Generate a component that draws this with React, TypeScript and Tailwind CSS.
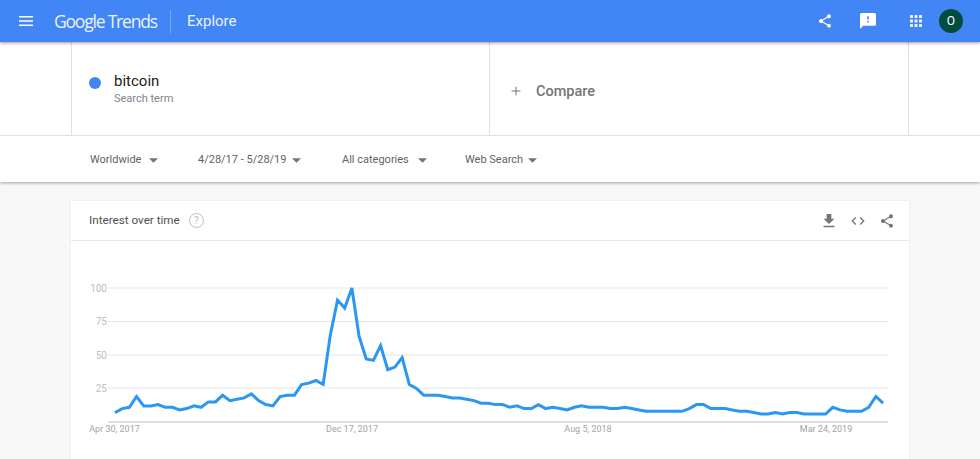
import React from 'react';
import { Plus } from 'lucide-react';

const values = [
  7, 10, 11, 19, 12, 12, 13, 11, 11, 9, 10, 12, 11, 15, 15, 20, 16, 17, 18, 21, 16, 13, 12, 19, 20, 20, 28, 29, 31, 28,
  65, 91, 85, 100, 64, 47, 46, 57, 39, 41, 48, 28, 25, 20, 20, 20, 19, 18, 18, 17, 16, 14, 14, 13, 13, 11, 12, 10, 10,
  13, 10, 11, 10, 9, 11, 12, 11, 11, 11, 10, 10, 11, 10, 9, 8, 8, 8, 8, 8, 8, 10, 13, 13, 10, 10, 10, 9, 8, 8, 7, 6, 6,
  7, 6, 7, 7, 6, 6, 6, 6, 11, 9, 8, 8, 8, 11, 19, 14,
];

const points = values.map((v, i) => `${115 + i * 7.178},${(422 - v * 1.34).toFixed(1)}`).join(' ');

const filters = [
  { label: 'Worldwide', width: 'w-[108px]', gap: 'ml-[8px]' },
  { label: '4/28/17 - 5/28/19', width: 'w-[144px]', gap: 'ml-[6px]' },
  { label: 'All categories', width: 'w-[123px]', gap: 'ml-[9px]' },
  { label: 'Web Search', width: 'w-auto', gap: 'ml-[5px]' },
];

const Chart: React.FC = () => (
  <svg width="980" height="218" viewBox="0 241 980 218" className="block -ml-[71px]">
    {[288, 321.5, 355, 388].map((y) => (
      <line key={y} x1="108" x2="888" y1={y} y2={y} stroke="#e8e8e8" strokeWidth="1" />
    ))}
    <line x1="108" x2="888" y1="422" y2="422" stroke="#bdbdbd" strokeWidth="1" />
    {[
      ['100', 291.5],
      ['75', 325],
      ['50', 358.5],
      ['25', 392],
    ].map(([t, y]) => (
      <text key={t} x="107" y={y} textAnchor="end" fontSize="10" fill="#b9bfc9" fontFamily="Roboto, sans-serif">
        {t}
      </text>
    ))}
    {[
      ['Apr 30, 2017', 114.5],
      ['Dec 17, 2017', 352],
      ['Aug 5, 2018', 588],
      ['Mar 24, 2019', 826],
    ].map(([t, x]) => (
      <text key={t} x={x} y="432" textAnchor="middle" fontSize="9" fill="#a3a3a3" fontFamily="Roboto, sans-serif">
        {t}
      </text>
    ))}
    <polyline points={points} fill="none" stroke="#2b97f3" strokeWidth="3" strokeLinejoin="miter" />
  </svg>
);

export default function App() {
  return (
    <div className="h-[459px] w-[980px] overflow-hidden bg-[#f8f8f8] font-['Roboto',sans-serif]">
      {/* Header */}
      <header className="relative z-20 flex h-[42px] items-center bg-[#4285f4] text-white shadow-[0_1px_3px_rgba(0,0,0,0.4)]">
        <svg width="14" height="10" viewBox="0 0 14 10" className="ml-[19px]">
          <path d="M0 0h14v1.5H0zM0 4.2h14v1.5H0zM0 8.5h14V10H0z" fill="#fff" />
        </svg>
        <span className="ml-[21px] w-[103px] font-['Open_Sans',sans-serif] text-[17.5px] tracking-[-1.2px] whitespace-nowrap opacity-90">
          Google Trends
        </span>
        <div className="ml-[13px] h-[23px] w-px bg-white/30" />
        <span className="ml-[16px] text-[15px] opacity-90">Explore</span>
        <div className="ml-auto flex items-center">
          <svg width="16" height="16" viewBox="0 0 24 24" fill="#fff" className="mr-[27px]">
            <path d="M18 16.08c-.76 0-1.44.3-1.96.77L8.91 12.7c.05-.23.09-.46.09-.7s-.04-.47-.09-.7l7.05-4.11c.54.5 1.25.81 2.04.81 1.66 0 3-1.34 3-3s-1.34-3-3-3-3 1.34-3 3c0 .24.04.47.09.7L8.04 9.81C7.5 9.31 6.79 9 6 9c-1.66 0-3 1.34-3 3s1.34 3 3 3c.79 0 1.5-.31 2.04-.81l7.12 4.16c-.05.21-.08.43-.08.65 0 1.61 1.31 2.92 2.92 2.92s2.92-1.31 2.92-2.92-1.31-2.92-2.92-2.92z" />
          </svg>
          <svg width="16" height="16" viewBox="2 2 20 20" fill="#fff" className="mr-[34px]">
            <path d="M20 2H4c-1.1 0-1.99.9-1.99 2L2 22l4-4h14c1.1 0 2-.9 2-2V4c0-1.1-.9-2-2-2zm-7 12h-2v-2h2v2zm0-4h-2V6h2v4z" />
          </svg>
          <svg width="12" height="12" viewBox="0 0 12 12" fill="#fff" className="mr-[17px] opacity-90">
            {[0, 4.5, 9].flatMap((y) =>
              [0, 4.5, 9].map((x) => <rect key={`${x}-${y}`} x={x} y={y} width="3" height="3" rx="0.6" />),
            )}
          </svg>
          <div className="mr-[17px] flex h-[24px] w-[24px] items-center justify-center rounded-full bg-[#004d40] text-[12px]">
            O
          </div>
        </div>
      </header>

      {/* Search terms */}
      <section className="relative z-10 bg-white shadow-[0_1px_3px_rgba(0,0,0,0.35)]">
        <div className="mx-[71px] flex h-[93px] w-[838px] border-x border-[#e0e0e0]">
          <div className="flex w-[418px] items-center border-r border-[#e0e0e0] pl-[17px]">
            <span className="-mt-[11px] h-[12px] w-[12px] rounded-full bg-[#4285f4]" />
            <div className="ml-[13px]">
              <div className="text-[15px] leading-[20px] text-[#212121]">bitcoin</div>
              <div className="text-[11px] leading-[14px] mt-[1px] text-[#80868b]">Search term</div>
            </div>
          </div>
          <div className="flex items-center pl-[19px] pt-[7px] text-[#757575]">
            <Plus size={14} strokeWidth={1.75} className="-mt-[2px]" />
            <span className="ml-[13px] text-[14.5px] font-medium">Compare</span>
          </div>
        </div>
        {/* Filters */}
        <div className="flex h-[47px] items-center border-t border-[#e0e0e0] pl-[90px] pt-[2px] text-[11px] text-[#5f6368]">
          {filters.map((f) => (
            <div key={f.label} className={`flex items-center whitespace-nowrap ${f.width}`}>
              {f.label}
              <svg width="9" height="5" viewBox="0 0 10 5" className={`shrink-0 ${f.gap}`}>
                <path d="M0 0h10L5 5z" fill="#757575" />
              </svg>
            </div>
          ))}
        </div>
      </section>

      {/* Card */}
      <main className="mx-[71px] mt-[19px] bg-white shadow-[0_0_2px_rgba(0,0,0,0.08)]">
        <div className="flex h-[40px] items-center border-b border-[#e8e8e8] pl-[18px] text-[11.7px] text-[#4f4f4f]">
          Interest over time
          <span className="ml-[9px] flex h-[15px] w-[15px] items-center justify-center rounded-full border border-[#bdbdbd] text-[10px] text-[#bdbdbd]">
            ?
          </span>
          <div className="ml-auto mr-[14px] flex items-center gap-[13px] text-[#757575]">
            <svg width="14" height="14" viewBox="5 3 14 18" fill="currentColor">
              <path d="M19 9h-4V3H9v6H5l7 7 7-7zM5 18v2h14v-2H5z" />
            </svg>
            <svg width="18" height="16" viewBox="0 0 24 24" fill="currentColor">
              <path d="M9.4 16.6 4.8 12l4.6-4.6L8 6l-6 6 6 6 1.4-1.4zm5.2 0 4.6-4.6-4.6-4.6L16 6l6 6-6 6-1.4-1.4z" />
            </svg>
            <svg width="16" height="16" viewBox="0 0 24 24" fill="currentColor" className="-ml-[1px]">
              <path d="M18 16.08c-.76 0-1.44.3-1.96.77L8.91 12.7c.05-.23.09-.46.09-.7s-.04-.47-.09-.7l7.05-4.11c.54.5 1.25.81 2.04.81 1.66 0 3-1.34 3-3s-1.34-3-3-3-3 1.34-3 3c0 .24.04.47.09.7L8.04 9.81C7.5 9.31 6.79 9 6 9c-1.66 0-3 1.34-3 3s1.34 3 3 3c.79 0 1.5-.31 2.04-.81l7.12 4.16c-.05.21-.08.43-.08.65 0 1.61 1.31 2.92 2.92 2.92s2.92-1.31 2.92-2.92-1.31-2.92-2.92-2.92z" />
            </svg>
          </div>
        </div>
        <Chart />
      </main>
    </div>
  );
}
